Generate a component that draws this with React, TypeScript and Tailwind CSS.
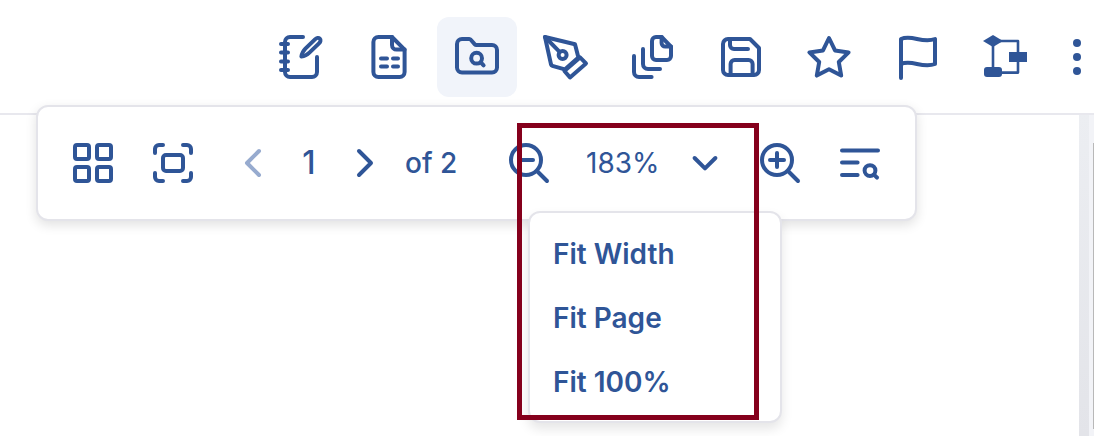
import React from 'react';

const Icon = ({ children, className = 'w-12 h-12' }: { children: React.ReactNode; className?: string }) => (
  <svg
    viewBox="0 0 24 24"
    fill="none"
    stroke="currentColor"
    strokeWidth={2}
    strokeLinecap="round"
    strokeLinejoin="round"
    className={`${className} shrink-0`}
  >
    {children}
  </svg>
);

const headerIcons = [
  <>
    <path d="M13 2H6.5A2.5 2.5 0 0 0 4 4.5v15A2.5 2.5 0 0 0 6.5 22h11a2.5 2.5 0 0 0 2.5-2.5V12" />
    <path d="M2 5.5h3.5M2 9.7h3.5M2 14.3h3.5M2 18.5h3.5" />
    <path d="M12.2 11.8c.2-1.5.8-2.8 2-4L19 3.2c.8-.8 1.8-1 2.4-.4.6.6.4 1.6-.4 2.4l-4.8 4.6c-1.2 1.2-2.5 1.8-4 2z" />
  </>,
  <>
    <path d="M13.5 2H6.7a2.5 2.5 0 0 0-2.5 2.5v15A2.5 2.5 0 0 0 6.7 22h10.6a2.5 2.5 0 0 0 2.5-2.5V8.3z" />
    <path d="M13.5 2v4a2.3 2.3 0 0 0 2.3 2.3h4" />
    <path d="M8 12.7h3M14 12.7h2.500M8 16.800h3M14 16.800h2.500" />
  </>,
  <>
    <path d="M2 17.300V5.500A2.500 2.500 0 0 1 4.500 3h3.600a1 1 0 0 1 .8.4l2 2.300a1 1 0 0 0 .8.3h7.800A2.500 2.500 0 0 1 22 8.500v8.800a2.500 2.500 0 0 1-2.500 2.500h-15A2.500 2.500 0 0 1 2 17.300z" />
    <circle cx="11.800" cy="12.600" r="2.700" />
    <path d="M13.900 14.700l1.400 1.500" />
  </>,
  <>
    <path d="M2 2l15 3.600 1.700 6.600-6.800 6-6.200-1.800a1 1 0 0 1-.7-.7z" />
    <path d="M2 2l7.300 7.400" />
    <circle cx="10.800" cy="11" r="2" />
    <path d="M19.500 12.200l3 3-8 7-2.800-3.200z" />
  </>,
  <>
    <path d="M16.300 2h-2.800a2 2 0 0 0-2 2v7.500a2 2 0 0 0 2 2H19a2 2 0 0 0 2-2V6.800z" />
    <path d="M16.300 2v3a1.800 1.800 0 0 0 1.800 1.800H21" />
    <path d="M7 8v7.500A2.500 2.500 0 0 0 9.500 18h6" />
    <path d="M2.500 11.500V19.500A2.500 2.500 0 0 0 5 22h6.300" />
  </>,
  <>
    <path d="M5.500 3h11L21 7.500v11a2.500 2.500 0 0 1-2.500 2.500h-13A2.500 2.500 0 0 1 3 18.500V5.500A2.500 2.500 0 0 1 5.500 3z" />
    <path d="M6.500 3v3a2 2 0 0 0 2 2h7" />
    <path d="M6.800 21v-5.500a2 2 0 0 1 2-2h7a2 2 0 0 1 2 2V21" />
  </>,
  <path d="M12 2.500l3 6.200 6.800 1-4.900 4.800 1.200 6.800-6.100-3.200-6.100 3.200 1.200-6.800-4.900-4.800 6.800-1z" />,
  <path d="M4 22.500V3c5.500-2.500 10.500 2.500 17 0v12.500c-6.500 2.500-11.500-2.500-17 0" />,
  <>
    <path d="M6 4v14M6 4h12.500v5.500M18.500 14.500v5.300H10" strokeWidth={1.3} strokeLinecap="butt" />
    <path d="M6 1l5 3-5 3-5-3z" fill="currentColor" stroke="none" />
    <rect x="1.500" y="17" width="9" height="5" rx="1.500" fill="currentColor" stroke="none" />
    <rect x="14" y="9.500" width="9" height="5" fill="currentColor" stroke="none" />
  </>,
];

const ZoomGlass = ({ plus }: { plus?: boolean }) => (
  <Icon>
    <circle cx="10.500" cy="10.500" r="7.500" />
    <path d="M16 16l5 5" />
    <path d="M7 10.500h7" />
    {plus && <path d="M10.500 7v7" />}
  </Icon>
);

export default function App() {
  return (
    <div className="relative h-[436px] w-full overflow-hidden bg-white font-['Inter',sans-serif] text-[#2f5597]">
      {/* top icon bar */}
      <header className="flex h-[115px] items-start justify-end border-b-2 border-[#e8e8ee] pt-[17px]">
        <div className="flex gap-2">
          {headerIcons.map((icon, i) => (
            <button
              key={i}
              className={`flex h-20 w-20 items-center justify-center rounded-xl ${i === 2 ? 'bg-[#f1f4fa]' : ''}`}
            >
              <Icon>{icon}</Icon>
            </button>
          ))}
        </div>
        <div className="ml-[15px] flex h-20 w-[34px] flex-col items-center justify-center gap-[6px]">
          <span className="h-2 w-2 rounded-full bg-[#2f5597]" />
          <span className="h-2 w-2 rounded-full bg-[#2f5597]" />
          <span className="h-2 w-2 rounded-full bg-[#2f5597]" />
        </div>
      </header>

      {/* page area with scrollbar strip */}
      <div className="flex h-[321px] justify-end">
        <div className="h-full w-[10px] bg-gradient-to-b from-[#eceef2] to-[#e3e4e9]" />
        <div className="h-full w-1 bg-[#f2f3f7]" />
        <div className="h-full w-px bg-[#f2f3f7] pb-[7px] pt-[28px]">
          <div className="h-full w-px bg-[#b8b8b8]" />
        </div>
      </div>

      {/* floating viewer toolbar */}
      <div className="absolute left-9 top-[105px] flex h-[116px] w-[881px] items-center rounded-xl border-2 border-[#e4e4ea] bg-white pl-[31px] shadow-[0_4px_12px_rgba(0,0,0,0.12)]">
        <Icon>
          <rect x="3" y="3" width="7" height="7" rx="1" />
          <rect x="14" y="3" width="7" height="7" rx="1" />
          <rect x="3" y="14" width="7" height="7" rx="1" />
          <rect x="14" y="14" width="7" height="7" rx="1" />
        </Icon>
        <div className="ml-8">
          <Icon>
            <path d="M3 7V5a2 2 0 0 1 2-2h2M17 3h2a2 2 0 0 1 2 2v2M21 17v2a2 2 0 0 1-2 2h-2M7 21H5a2 2 0 0 1-2-2v-2" />
            <rect x="7" y="8" width="10" height="8" rx="1.500" />
          </Icon>
        </div>
        <div className="ml-8 text-[#97abcf]">
          <Icon>
            <path d="M15 6l-6 6 6 6" />
          </Icon>
        </div>
        <span className="w-16 text-center text-[32px] font-medium">1</span>
        <Icon>
          <path d="M9 6l6 6-6 6" />
        </Icon>
        <span className="ml-4 w-[51px] whitespace-nowrap text-[28px] font-medium">of 2</span>
        <div className="ml-[49px]">
          <ZoomGlass />
        </div>
        <span className="ml-[33px] w-[72px] text-[28px]">183%</span>
        <div className="ml-[23px]">
          <Icon>
            <path d="M6.800 9.500l5.200 5.200 5.200-5.200" />
          </Icon>
        </div>
        <div className="ml-[27px]">
          <ZoomGlass plus />
        </div>
        <div className="ml-8">
          <Icon>
            <path d="M3 5.800h18M3 11.800h7.800M3 18h7.800" />
            <circle cx="17" cy="15.800" r="2.700" />
            <path d="M19 17.800l1.500 1.500" />
          </Icon>
        </div>

        {/* zoom menu */}
        <div className="absolute left-[490px] top-[104px] flex h-[212px] w-[254px] flex-col rounded-xl border-2 border-[#e4e4ea] bg-white pl-[23px] pt-[9px] text-[28px] font-semibold shadow-[0_6px_12px_rgba(0,0,0,0.1)]">
          <div className="flex h-16 items-center">Fit Width</div>
          <div className="flex h-16 items-center">Fit Page</div>
          <div className="flex h-16 items-center">Fit 100%</div>
        </div>
      </div>

      {/* annotation frame */}
      <div className="absolute left-[517px] top-[123px] h-[297px] w-[242px] border-[5px] border-[#85001c]" />
    </div>
  );
}
